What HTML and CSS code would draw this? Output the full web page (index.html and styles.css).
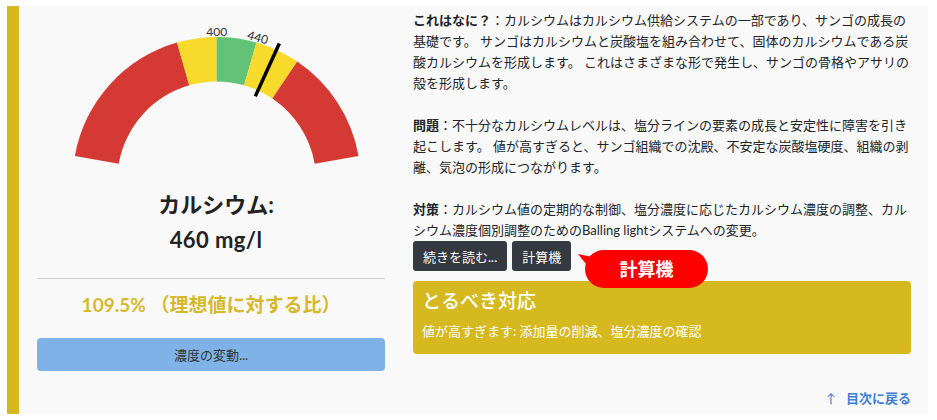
FILE: index.html
```html
<!DOCTYPE html>
<html lang="ja">
<head>
<meta charset="utf-8">
<title>カルシウム</title>
<link rel="stylesheet" href="styles.css">
</head>
<body>
<div class="card">
  <section class="gauge-col">
    <svg class="gauge" width="348" height="170" viewBox="0 0 348 170" aria-hidden="true">
      <path fill="#d43a33" d="M37.89 149.99 A144 144 0 0 1 140.01 36.57 L152.28 79.35 A99.5 99.5 0 0 0 81.71 157.72 Z"/>
      <path fill="#f7da2b" d="M140.01 36.57 A144 144 0 0 1 179.7 31 L179.7 75.5 A99.5 99.5 0 0 0 152.28 79.35 Z"/>
      <path fill="#62c277" d="M179.7 31 A144 144 0 0 1 219.39 36.57 L207.12 79.35 A99.5 99.5 0 0 0 179.7 75.5 Z"/>
      <path fill="#f7da2b" d="M219.39 36.57 A144 144 0 0 1 260.22 55.62 L235.34 92.51 A99.5 99.5 0 0 0 207.12 79.35 Z"/>
      <path fill="#d43a33" d="M260.22 55.62 A144 144 0 0 1 321.51 149.99 L277.69 157.72 A99.5 99.5 0 0 0 235.34 92.51 Z"/>
      <line x1="218.27" y1="90.37" x2="242.32" y2="37.59" stroke="#000" stroke-width="3.5"/>
      <text class="tick" x="179.7" y="30" text-anchor="middle">400</text>
      <text class="tick" x="179.7" y="30" text-anchor="middle" transform="rotate(16 179.7 175)">440</text>
    </svg>
    <h2 class="param-name">カルシウム:</h2>
    <div class="param-value">460 mg/l</div>
    <hr class="divider">
    <div class="ratio">109.5% （理想値に対する比）</div>
    <button class="btn-change" type="button">濃度の変動...</button>
  </section>

  <section class="info-col">
    <p><strong>これはなに？</strong>：カルシウムはカルシウム供給システムの一部であり、サンゴの成長の基礎です。 サンゴはカルシウムと炭酸塩を組み合わせて、固体のカルシウムである炭酸カルシウムを形成します。 これはさまざまな形で発生し、サンゴの骨格やアサリの殻を形成します。</p>
    <p><strong>問題</strong>：不十分なカルシウムレベルは、塩分ラインの要素の成長と安定性に障害を引き起こします。 値が高すぎると、サンゴ組織での沈殿、不安定な炭酸塩硬度、組織の剥離、気泡の形成につながります。</p>
    <p><strong>対策</strong>：カルシウム値の定期的な制御、塩分濃度に応じたカルシウム濃度の調整、カルシウム濃度個別調整のためのBalling lightシステムへの変更。</p>
    <div class="actions">
      <button class="btn-dark" type="button">続きを読む...</button>
      <button class="btn-dark" type="button">計算機</button>
      <span class="callout">計算機</span>
    </div>
    <div class="todo">
      <h3 class="todo-title">とるべき対応</h3>
      <div class="todo-text">値が高すぎます: 添加量の削減、塩分濃度の確認</div>
    </div>
    <div class="back"><a href="#" class="back-link"><span class="arrow">↑</span>目次に戻る</a></div>
  </section>
</div>
</body>
</html>
```

FILE: styles.css
```css
* { box-sizing: border-box; }

html, body {
  margin: 0;
  padding: 0;
  background: #ffffff;
}

body {
  font-family: Lato, "Noto Sans CJK JP", sans-serif;
  color: #212529;
  font-size: 13px;
  text-spacing-trim: space-all;
}

.card {
  margin: 6px 9px 0 7px;
  height: 408px;
  background: #f9f9f9;
  border-left: 12px solid #d5b91d;
  display: grid;
  grid-template-columns: 384px 1fr;
}

/* left column */
.gauge-col {
  padding: 0 18px;
  display: flex;
  flex-direction: column;
  align-items: stretch;
}

.gauge {
  display: block;
}

.tick {
  font-family: Lato, "Noto Sans CJK JP", sans-serif;
  font-size: 12px;
  fill: #333;
}

.param-name {
  margin: 14px 0 0;
  padding-left: 10px;
  text-align: center;
  font-size: 22px;
  line-height: 30px;
  font-weight: 700;
  color: #222;
}

.param-value {
  margin-top: 5px;
  padding-left: 10px;
  text-align: center;
  font-size: 22px;
  line-height: 30px;
  font-weight: 700;
  color: #222;
  letter-spacing: 0.4px;
}

.divider {
  margin: 23px 0 0;
  border: 0;
  border-top: 1px solid #cfcfcf;
  height: 0;
}

.ratio {
  margin-top: 13px;
  text-align: center;
  font-size: 19px;
  line-height: 26px;
  font-weight: 700;
  color: #d6b82c;
}

.btn-change {
  margin-top: 20px;
  height: 33px;
  border: 0;
  border-radius: 4px;
  background: #7fb3e8;
  color: #333;
  font-family: Lato, "Noto Sans CJK JP", sans-serif;
  font-size: 13px;
}

/* right column */
.info-col {
  padding: 4px 17px 0 10px;
  display: flex;
  flex-direction: column;
}

.info-col p {
  margin: 0 0 21px;
  font-size: 13px;
  line-height: 21px;
  color: #212529;
}

.info-col p:last-of-type {
  margin-bottom: 0;
}

.info-col strong {
  font-weight: 700;
}

.actions {
  position: relative;
  display: flex;
  gap: 5px;
  height: 30px;
}

.btn-dark {
  height: 30px;
  padding: 0 10px;
  border: 0;
  border-radius: 3px;
  background: #343a40;
  color: #ffffff;
  font-family: Lato, "Noto Sans CJK JP", sans-serif;
  font-size: 13px;
}

.callout {
  position: absolute;
  left: 172px;
  top: 9px;
  width: 123px;
  height: 38px;
  border-radius: 19px;
  background: #ff0000;
  color: #ffffff;
  font-size: 18px;
  font-weight: 700;
  line-height: 38px;
  text-align: center;
  z-index: 2;
}

.callout::before {
  content: "";
  position: absolute;
  left: -7px;
  top: 4px;
  width: 19px;
  height: 16px;
  background: #ff0000;
  clip-path: polygon(0 0, 100% 25%, 68% 100%);
}

.todo {
  margin-top: 10px;
  height: 73px;
  padding: 8px 9px 0;
  border-radius: 4px;
  background: #d5b91e;
  color: #ffffff;
}

.todo-title {
  margin: 0;
  font-size: 19px;
  line-height: 24px;
  font-weight: 500;
}

.todo-text {
  margin-top: 8px;
  font-size: 13px;
  line-height: 20px;
}

.back {
  margin-top: 34px;
  text-align: right;
  line-height: 20px;
}

.back-link {
  color: #3f7fd0;
  text-decoration: none;
  font-size: 13px;
  font-weight: 700;
}

.arrow {
  margin-right: 10px;
  font-weight: 400;
}
```
